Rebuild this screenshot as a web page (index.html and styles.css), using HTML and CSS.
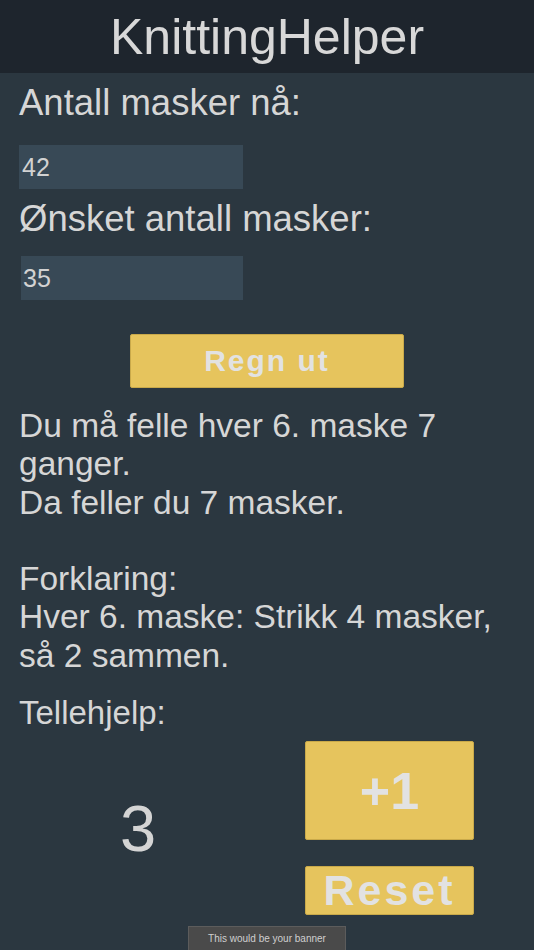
FILE: index.html
```html
<!DOCTYPE html>
<html lang="no">
<head>
<meta charset="utf-8">
<title>KnittingHelper</title>
<link rel="stylesheet" href="styles.css">
</head>
<body>
<header class="topbar">
  <h1 class="title">KnittingHelper</h1>
</header>
<main class="content">
  <label class="label label-first">Antall masker nå:</label>
  <div class="field field-first">42</div>
  <label class="label label-second">Ønsket antall masker:</label>
  <div class="field field-second">35</div>
  <div class="calc-row">
    <button class="btn btn-calc">Regn ut</button>
  </div>
  <p class="result">Du må felle hver 6. maske 7 ganger.<br>Da feller du 7 masker.<br><br>Forklaring:<br>Hver 6. maske: Strikk 4 masker, så 2 sammen.</p>
  <p class="counter-label">Tellehjelp:</p>
  <div class="counter">
    <div class="count">3</div>
    <div class="counter-buttons">
      <button class="btn btn-plus">+1</button>
      <button class="btn btn-reset">Reset</button>
    </div>
  </div>
</main>
<div class="banner">This would be your banner</div>
</body>
</html>
```

FILE: styles.css
```css
html, body {
  margin: 0;
  padding: 0;
}
body {
  background: #2b3740;
  color: #d6d6d6;
  font-family: "Liberation Sans", Arial, sans-serif;
  width: 534px;
  height: 950px;
  overflow: hidden;
  position: relative;
}
.topbar {
  background: #1e252d;
  height: 73px;
  display: flex;
  justify-content: center;
}
.title {
  margin: 0;
  font-weight: normal;
  font-size: 50px;
  line-height: 56px;
  padding-top: 9px;
  color: #d8d8d8;
}
.content {
  padding: 0 19px;
  display: flex;
  flex-direction: column;
  align-items: flex-start;
}
.label {
  display: block;
  font-size: 36.5px;
  line-height: 40px;
  color: #d6d6d6;
}
.label-first {
  margin-top: 10px;
}
.label-second {
  margin-top: 10px;
}
.field {
  background: #384956;
  height: 44px;
  display: flex;
  align-items: center;
  font-size: 25px;
  color: #d2d2d2;
  box-sizing: border-box;
}
.field-first {
  margin-top: 22px;
  width: 224px;
  padding-left: 3px;
}
.field-second {
  margin-top: 17px;
  width: 222px;
  margin-left: 2px;
  padding-left: 2px;
}
.calc-row {
  align-self: stretch;
  display: flex;
  justify-content: center;
  margin: 34px -19px 0;
}
.btn {
  font-family: "Liberation Sans", Arial, sans-serif;
  font-weight: bold;
  background: #e6c45d;
  color: #e2e2e2;
  border: 1px solid #c9a94a;
  border-radius: 2px;
  padding: 0;
  box-sizing: border-box;
  display: flex;
  align-items: center;
  justify-content: center;
}
.btn-calc {
  width: 274px;
  height: 54px;
  font-size: 30px;
  letter-spacing: 2px;
}
.result {
  margin: 19px 0 0;
  width: 496px;
  font-size: 33.5px;
  line-height: 38.3px;
  color: #d6d6d6;
}
.counter-label {
  margin: 19px 0 0;
  font-size: 33px;
  line-height: 38px;
  color: #d6d6d6;
}
.counter {
  margin-top: 9px;
  display: grid;
  grid-template-columns: 238px 169px;
  column-gap: 48px;
}
.count {
  display: flex;
  align-items: center;
  justify-content: center;
  font-size: 65px;
  color: #d4d4d4;
}
.counter-buttons {
  display: flex;
  flex-direction: column;
  gap: 26px;
}
.btn-plus {
  width: 169px;
  height: 99px;
  font-size: 52px;
}
.btn-reset {
  width: 169px;
  height: 49px;
  font-size: 43px;
  letter-spacing: 3px;
  overflow: visible;
  white-space: nowrap;
}
.banner {
  position: absolute;
  left: 188px;
  bottom: 0;
  width: 158px;
  height: 24px;
  box-sizing: border-box;
  background: #4a4a4a;
  border: 1px solid #5c5c5c;
  border-bottom: none;
  color: #cfcfcf;
  font-size: 10px;
  display: flex;
  align-items: center;
  justify-content: center;
}
```
